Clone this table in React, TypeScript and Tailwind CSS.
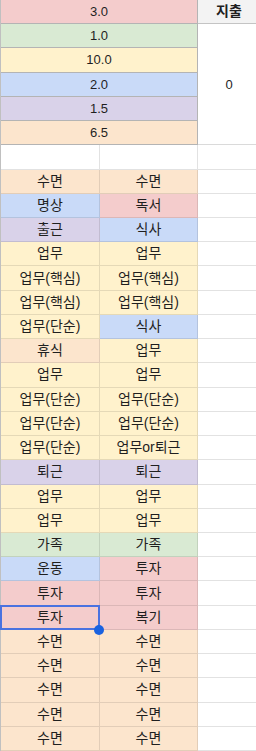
import React from 'react';

type C = 'o' | 'b' | 'p' | 'pu' | 'y' | 'g';

const bg: Record<C, string> = {
  o: 'bg-[#fce5cd]',
  b: 'bg-[#c9daf8]',
  p: 'bg-[#f4cccc]',
  pu: 'bg-[#d9d2e9]',
  y: 'bg-[#fff2cc]',
  g: 'bg-[#d9ead3]',
};

const rows: [string, C, string, C][] = [
  ['수면', 'o', '수면', 'o'],
  ['명상', 'b', '독서', 'p'],
  ['출근', 'pu', '식사', 'b'],
  ['업무', 'y', '업무', 'y'],
  ['업무(핵심)', 'y', '업무(핵심)', 'y'],
  ['업무(핵심)', 'y', '업무(핵심)', 'y'],
  ['업무(단순)', 'y', '식사', 'b'],
  ['휴식', 'o', '업무', 'y'],
  ['업무', 'y', '업무', 'y'],
  ['업무(단순)', 'y', '업무(단순)', 'y'],
  ['업무(단순)', 'y', '업무(단순)', 'y'],
  ['업무(단순)', 'y', '업무or퇴근', 'y'],
  ['퇴근', 'pu', '퇴근', 'pu'],
  ['업무', 'y', '업무', 'y'],
  ['업무', 'y', '업무', 'y'],
  ['가족', 'g', '가족', 'g'],
  ['운동', 'b', '투자', 'p'],
  ['투자', 'p', '투자', 'p'],
  ['투자', 'p', '복기', 'p'],
  ['수면', 'o', '수면', 'o'],
  ['수면', 'o', '수면', 'o'],
  ['수면', 'o', '수면', 'o'],
  ['수면', 'o', '수면', 'o'],
  ['수면', 'o', '수면', 'o'],
];

const top: [string, C][] = [
  ['1.0', 'g'],
  ['10.0', 'y'],
  ['2.0', 'b'],
  ['1.5', 'pu'],
  ['6.5', 'o'],
];

const cell = 'flex items-center justify-center border-r border-b';

export default function App() {
  return (
    <div className="w-[256px] h-[751px] overflow-hidden bg-white text-[14px] text-[#1f1f1f] font-['Liberation_Sans','Noto_Sans_CJK_KR',sans-serif]">
      <div className="grid grid-cols-[99px_98px_59px] grid-rows-[repeat(31,minmax(0,1fr))] h-[751px] border-l border-[#c0c0c0]">
        {/* summary block */}
        <div className={`${cell} col-span-2 bg-[#f4cccc] border-[#b4b4b4] text-[13px]`}>3.0</div>
        <div className="flex items-center justify-center border-b border-[#c4c4c4] bg-[#f3f3f3] font-bold pl-[3px]">지출</div>
        {top.map(([v, c], i) => (
          <div
            key={v}
            className={`${cell} col-span-2 col-start-1 ${bg[c]} border-[#b4b4b4] text-[13px]`}
            style={{ gridRowStart: i + 2 }}
          >
            {v}
          </div>
        ))}
        <div className="col-start-3 row-start-2 row-span-5 flex items-center justify-center border-b border-[#dadada] text-[13px] pl-[3px]">
          0
        </div>

        {/* blank row */}
        <div className={`${cell} border-[#e2e2e2]`}></div>
        <div className={`${cell} border-[#e2e2e2]`}></div>
        <div className="border-b border-[#e2e2e2]"></div>

        {rows.map(([a, ca, b, cb], i) => (
          <React.Fragment key={i}>
            <div className={`${cell} ${bg[ca]} border-black/10 relative`}>
              {a}
              {i === 18 && (
                <>
                  <div className="absolute -left-px -top-px -right-px -bottom-px border-2 border-[#4a72e0]"></div>
                  <div className="absolute -right-[5px] -bottom-[6px] w-[10px] h-[10px] rounded-full bg-[#1a62e0] z-10"></div>
                </>
              )}
            </div>
            <div className={`${cell} ${bg[cb]} border-black/10`}>{b}</div>
            <div className="border-b border-[#e2e2e2]"></div>
          </React.Fragment>
        ))}
      </div>
    </div>
  );
}
